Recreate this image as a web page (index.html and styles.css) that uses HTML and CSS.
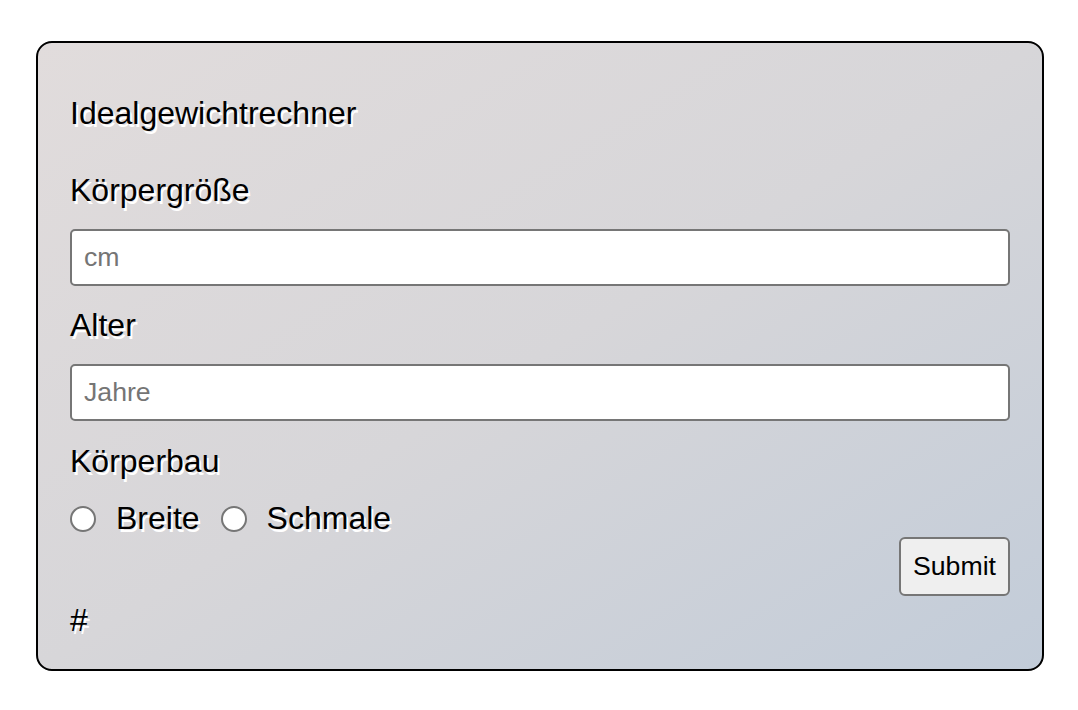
FILE: index.html
```html
<!DOCTYPE html>
<html lang="de">
<head>
<meta charset="utf-8">
<title>Idealgewichtrechner</title>
<link rel="stylesheet" href="styles.css">
</head>
<body>
<form class="card">
  <div class="title">Idealgewichtrechner</div>
  <label class="label label-first" for="groesse">Körpergröße</label>
  <input class="field" id="groesse" type="text" placeholder="cm">
  <label class="label" for="alter">Alter</label>
  <input class="field" id="alter" type="text" placeholder="Jahre">
  <div class="label label-bau">Körperbau</div>
  <div class="radios">
    <input class="radio" type="radio" name="bau" id="breit">
    <label class="radio-label" for="breit">Breite</label>
    <input class="radio" type="radio" name="bau" id="schmal">
    <label class="radio-label" for="schmal">Schmale</label>
  </div>
  <div class="actions">
    <button class="submit" type="button">Submit</button>
  </div>
  <div class="result">#</div>
</form>
</body>
</html>
```

FILE: styles.css
```css
html, body {
  margin: 0;
  padding: 0;
  background: #ffffff;
}

body {
  font-family: "Liberation Sans", Arial, Helvetica, sans-serif;
  color: #000000;
}

.card {
  box-sizing: border-box;
  margin: 41px 34px 0 36px;
  width: 1008px;
  height: 630px;
  padding: 32px 32px 30px 32px;
  border: 2px solid #000000;
  border-radius: 16px;
  background: linear-gradient(to bottom right, #e1dcdc 0%, #d7d6d9 50%, #c2ccd9 100%);
  display: flex;
  flex-direction: column;
}

.title,
.label,
.radio-label,
.result {
  font-size: 32px;
  line-height: 37px;
  text-shadow: 2px 3px 0 #ffffff;
}

.title {
  margin-top: 20px;
}

.label {
  display: block;
  margin-top: 21px;
}

.label-first {
  margin-top: 40px;
}

.label-bau {
  margin-top: 22px;
}

.field {
  box-sizing: border-box;
  display: block;
  width: 100%;
  height: 57px;
  margin: 20px 0 0 0;
  padding: 0 12px;
  border: 2px solid #767676;
  border-radius: 5px;
  background: #ffffff;
  font-family: "Liberation Sans", Arial, Helvetica, sans-serif;
  font-size: 26.67px;
  color: #000000;
  outline: none;
}

.field::placeholder {
  color: #757575;
}

.radios {
  display: flex;
  align-items: center;
  margin-top: 20px;
  height: 37px;
}

.radio {
  appearance: none;
  -webkit-appearance: none;
  box-sizing: border-box;
  width: 26px;
  height: 26px;
  margin: 0 20px 0 0;
  border: 2px solid #767676;
  border-radius: 50%;
  background: #ffffff;
  flex: none;
}

.radio-label {
  margin-right: 21px;
}

.actions {
  display: flex;
  justify-content: flex-end;
  margin-top: 0;
}

.submit {
  box-sizing: border-box;
  width: 111px;
  height: 59px;
  padding: 0;
  border: 2px solid #767676;
  border-radius: 6px;
  background: #efefef;
  font-family: "Liberation Sans", Arial, Helvetica, sans-serif;
  font-size: 26.67px;
  color: #000000;
}

.result {
  margin-top: 6px;
}
```
